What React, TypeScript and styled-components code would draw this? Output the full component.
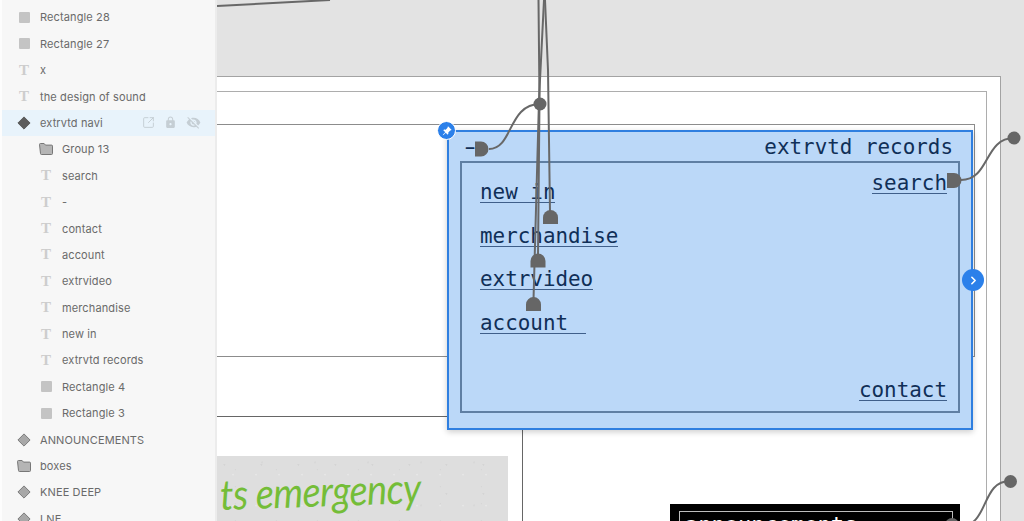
import React from 'react';
import styled, { createGlobalStyle } from 'styled-components';
import { ChevronRight, SquareArrowOutUpRight } from 'lucide-react';
import { BsPinAngleFill } from 'react-icons/bs';
import { MdLock, MdVisibilityOff } from 'react-icons/md';

type LayerKind = 'rect' | 'text' | 'diamond' | 'folder';

interface Layer {
  name: string;
  kind: LayerKind;
  depth: 0 | 1;
  selected?: boolean;
}

const LAYERS: Layer[] = [
  { name: 'Rectangle 28', kind: 'rect', depth: 0 },
  { name: 'Rectangle 27', kind: 'rect', depth: 0 },
  { name: 'x', kind: 'text', depth: 0 },
  { name: 'the design of sound', kind: 'text', depth: 0 },
  { name: 'extrvtd navi', kind: 'diamond', depth: 0, selected: true },
  { name: 'Group 13', kind: 'folder', depth: 1 },
  { name: 'search', kind: 'text', depth: 1 },
  { name: '-', kind: 'text', depth: 1 },
  { name: 'contact', kind: 'text', depth: 1 },
  { name: 'account', kind: 'text', depth: 1 },
  { name: 'extrvideo', kind: 'text', depth: 1 },
  { name: 'merchandise', kind: 'text', depth: 1 },
  { name: 'new in', kind: 'text', depth: 1 },
  { name: 'extrvtd records', kind: 'text', depth: 1 },
  { name: 'Rectangle 4', kind: 'rect', depth: 1 },
  { name: 'Rectangle 3', kind: 'rect', depth: 1 },
  { name: 'ANNOUNCEMENTS', kind: 'diamond', depth: 0 },
  { name: 'boxes', kind: 'folder', depth: 0 },
  { name: 'KNEE DEEP', kind: 'diamond', depth: 0 },
  { name: 'LNE', kind: 'diamond', depth: 0 },
];

const LayerIcon = ({ kind, selected }: { kind: LayerKind; selected?: boolean }) => {
  if (kind === 'rect') return <RectIcon />;
  if (kind === 'text') return <TextIcon>T</TextIcon>;
  if (kind === 'folder') {
    return (
      <svg width="14" height="12" viewBox="0 0 14 12">
        <path
          d="M.5 1.5a1 1 0 0 1 1-1h3.6l1.4 1.6h6a1 1 0 0 1 1 1v7.4a1 1 0 0 1-1 1h-10a1 1 0 0 1-1-1z"
          fill="#b5b5b5"
          stroke="#777"
        />
      </svg>
    );
  }
  return (
    <svg width="14" height="14" viewBox="0 0 14 14">
      <path
        d="M7 .9 13.1 7 7 13.1.9 7z"
        fill={selected ? '#5c5c5c' : '#a8a8a8'}
        stroke={selected ? '#5c5c5c' : '#7c7c7c'}
      />
    </svg>
  );
};

// one wire between a port and its handle, in page coordinates
const WIRES = [
  'M489 149C513 149 508 104 540 104',
  'M961 180C990 180 984 138 1014 138',
  'M958 527C990 527 980 481 1010 481',
  'M217 6L330 0',
  'M538 256L539.5 100L538.5 0',
  'M533.5 300L539 100L544 0',
  'M550 212L548 70L545 0',
];

const HANDLES = [
  [540, 104],
  [1014, 138],
  [1010.5, 481.5],
];

const PORTS = [
  'M475 141.5h6a7.5 7.5 0 0 1 0 15h-6z',
  'M947 173h7a7.5 7.5 0 0 1 0 15h-7z',
  'M543 224v-6.5a7.5 7.5 0 0 1 15 0v6.5z',
  'M530.5 267.5v-6.5a7.5 7.5 0 0 1 15 0v6.5z',
  'M526 311v-6.5a7.5 7.5 0 0 1 15 0v6.5z',
  'M945 528v-3a7 7 0 0 1 14 0v3z',
];

const App = () => (
  <>
    <GlobalStyle />
    <Page>
      <Sidebar>
        {LAYERS.map((layer) => (
          <LayerRow key={layer.name} $depth={layer.depth} $selected={layer.selected}>
            <IconSlot>
              <LayerIcon kind={layer.kind} selected={layer.selected} />
            </IconSlot>
            <LayerName>{layer.name}</LayerName>
            {layer.selected && (
              <RowActions>
                <SquareArrowOutUpRight size={13} strokeWidth={1.75} />
                <MdLock size={13} />
                <MdVisibilityOff size={15} />
              </RowActions>
            )}
          </LayerRow>
        ))}
      </Sidebar>

      <Canvas>
        <Frame $top={76} $right={23} $color="#a3a3a3" />
        <Frame $top={91} $right={37} $color="#adadad" />
        <Frame $top={124} $right={49} $height={231} $color="#8c8c8c" />
        <Frame $top={416} $right={501} $color="#666" />

        <PaperImage>
          <Scrawl>ts emergency</Scrawl>
        </PaperImage>

        <BlackCard>
          <BlackCardInner>announcements</BlackCardInner>
        </BlackCard>

        <NavBox>
          <NavHeader>
            <NavDash>-</NavDash>
            <span>extrvtd records</span>
          </NavHeader>
          <NavInner>
            <NavLinks>
              <NavLink>new in</NavLink>
              <NavLink>merchandise</NavLink>
              <NavLink>extrvideo</NavLink>
              <NavLink $extra={5}>account </NavLink>
            </NavLinks>
            <NavSide>
              <NavLink>search</NavLink>
              <NavLink>contact</NavLink>
            </NavSide>
          </NavInner>
        </NavBox>

        <Wires viewBox="217 0 807 521">
          {WIRES.map((d) => (
            <path key={d} d={d} fill="none" stroke="#686868" strokeWidth="2" />
          ))}
          {HANDLES.map(([cx, cy]) => (
            <circle key={cx} cx={cx} cy={cy} r="6.5" fill="#666" />
          ))}
          {PORTS.map((d) => (
            <path key={d} d={d} fill="#666" />
          ))}
        </Wires>

        <PinBadge>
          <BsPinAngleFill size={10} />
        </PinBadge>
        <NextBadge>
          <ChevronRight size={13} strokeWidth={3} />
        </NextBadge>
      </Canvas>
    </Page>
  </>
);

const GlobalStyle = createGlobalStyle`
  html, body {
    margin: 0;
    height: 100%;
    overflow: hidden;
  }
  #root {
    height: 100%;
  }
`;

const Page = styled.div`
  display: flex;
  width: 1024px;
  height: 521px;
  overflow: hidden;
  font-family: 'Inter', 'Liberation Sans', sans-serif;
`;

const Sidebar = styled.div`
  flex: 0 0 217px;
  box-sizing: border-box;
  height: 521px;
  padding-top: 4.2px;
  overflow: hidden;
  background: #f7f7f7;
  border-left: 2px solid #fdfdfd;
  border-right: 2px solid #ececec;
`;

const LayerRow = styled.div<{ $depth: number; $selected?: boolean }>`
  display: flex;
  align-items: center;
  height: 26.4px;
  padding-left: ${(p) => 14 + p.$depth * 22}px;
  background: ${(p) => (p.$selected ? '#e8f3fb' : 'transparent')};
`;

const IconSlot = styled.span`
  display: flex;
  flex: 0 0 16px;
  align-items: center;
  justify-content: center;
  margin-right: 8px;
`;

const RectIcon = styled.span`
  width: 11px;
  height: 11px;
  border-radius: 1px;
  background: #c4c4c4;
`;

const TextIcon = styled.span`
  color: #cdcdcd;
  font-family: 'Liberation Serif', serif;
  font-size: 15px;
  font-weight: 700;
  line-height: 1;
`;

const LayerName = styled.span`
  flex: 1;
  color: #6a6a6a;
  font-size: 11px;
  letter-spacing: 0.12px;
  white-space: nowrap;
`;

const RowActions = styled.span`
  display: flex;
  align-items: center;
  gap: 9px;
  margin-right: 14px;
  color: #c5ced4;
`;

const Canvas = styled.div`
  position: relative;
  flex: 1;
  height: 521px;
  overflow: hidden;
  background: #e3e3e3;
`;

const Frame = styled.div<{ $top: number; $right: number; $height?: number; $color: string }>`
  position: absolute;
  top: ${(p) => p.$top}px;
  right: ${(p) => p.$right}px;
  left: -4px;
  bottom: ${(p) => (p.$height ? 'auto' : '-4px')};
  height: ${(p) => (p.$height ? `${p.$height}px` : 'auto')};
  background: #fff;
  border: 1px solid ${(p) => p.$color};
`;

const PaperImage = styled.div`
  position: absolute;
  top: 456px;
  left: 0;
  width: 291px;
  height: 70px;
  overflow: hidden;
  background-color: #dedede;
  background-image:
    radial-gradient(circle at 20% 30%, #d4d4d4 0.7px, transparent 1.2px),
    radial-gradient(circle at 70% 60%, #e6e6e6 0.7px, transparent 1.2px),
    radial-gradient(circle at 45% 80%, #d6d6d6 0.5px, transparent 1px),
    radial-gradient(circle at 85% 15%, #d8d8d8 0.8px, transparent 1.4px);
  background-size: 37px 29px, 23px 31px, 41px 17px, 53px 43px;
`;

const Scrawl = styled.div`
  position: absolute;
  top: 8px;
  left: 3px;
  color: #74bd38;
  font-family: 'Lato', sans-serif;
  font-size: 42px;
  font-style: italic;
  font-weight: 400;
  line-height: 60px;
  letter-spacing: -0.6px;
  white-space: nowrap;
  transform: rotate(-2deg) scaleX(0.9);
  transform-origin: left center;
`;

const BlackCard = styled.div`
  position: absolute;
  top: 504px;
  left: 453px;
  box-sizing: border-box;
  width: 290px;
  height: 40px;
  padding: 7px 7px 0 9px;
  background: #000;
`;

const BlackCardInner = styled.div`
  height: 40px;
  padding-left: 5px;
  border: 1px solid #bdbdbd;
  color: #fff;
  font-family: 'DejaVu Sans Mono', monospace;
  font-size: 22px;
  line-height: 26px;
`;

const NavBox = styled.div`
  position: absolute;
  top: 130px;
  left: 230px;
  display: flex;
  flex-direction: column;
  box-sizing: border-box;
  width: 526px;
  height: 300px;
  padding: 0 11px 15px;
  background: #bbd8f8;
  border: 2px solid #2f7fe0;
  box-shadow: 0 2px 6px rgba(0, 0, 0, 0.2);
  color: #102f57;
  font-family: 'DejaVu Sans Mono', monospace;
  font-size: 20.9px;
`;

const NavHeader = styled.div`
  display: flex;
  flex: 0 0 29px;
  align-items: center;
  justify-content: space-between;
  padding: 2px 7px 0 0;
  box-sizing: border-box;
  line-height: 27px;
  white-space: pre;
`;

const NavDash = styled.span`
  transform: scaleX(1.6);
  transform-origin: left center;
`;

const NavInner = styled.div`
  display: flex;
  flex: 1;
  justify-content: space-between;
  padding: 0 11px 10px 18px;
  border: 2px solid #5f7fa3;
`;

const NavLinks = styled.div`
  display: flex;
  flex-direction: column;
  align-items: flex-start;
  gap: 14.6px;
  padding-top: 11px;
`;

const NavSide = styled.div`
  display: flex;
  flex-direction: column;
  align-items: flex-end;
  justify-content: space-between;
  padding-top: 2px;
`;

const NavLink = styled.span<{ $extra?: number }>`
  display: inline-block;
  padding-top: 9px;
  padding-right: ${(p) => p.$extra ?? 0}px;
  border-bottom: 1.5px solid #3f5f8a;
  line-height: 19px;
  white-space: pre;
`;

const Wires = styled.svg`
  position: absolute;
  top: 0;
  left: 0;
  width: 807px;
  height: 521px;
  pointer-events: none;
`;

const PinBadge = styled.div`
  position: absolute;
  top: 121px;
  left: 220px;
  display: flex;
  align-items: center;
  justify-content: center;
  box-sizing: border-box;
  width: 19px;
  height: 19px;
  border: 1px solid #fff;
  border-radius: 50%;
  background: #2b80ea;
  color: #fff;
`;

const NextBadge = styled.div`
  position: absolute;
  top: 269px;
  left: 745px;
  display: flex;
  align-items: center;
  justify-content: center;
  width: 22px;
  height: 22px;
  border-radius: 50%;
  background: #2b80ea;
  color: #fff;
`;

export default App;
